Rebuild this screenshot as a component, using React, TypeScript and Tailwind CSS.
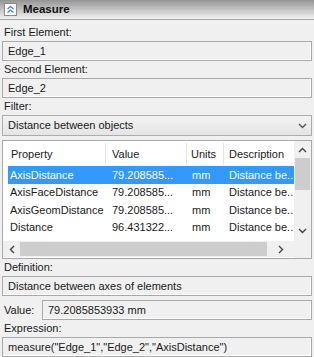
import React from "react";

const rows = [
  { p: "AxisDistance", v: "79.208585...", u: "mm", d: "Distance be..", sel: true },
  { p: "AxisFaceDistance", v: "79.208585...", u: "mm", d: "Distance be..", sel: false },
  { p: "AxisGeomDistance", v: "79.208585...", u: "mm", d: "Distance be..", sel: false },
  { p: "Distance", v: "96.431322...", u: "mm", d: "Distance be..", sel: false },
];

function Box({ children, className = "" }: { children?: React.ReactNode; className?: string }) {
  return (
    <div
      className={
        "h-[20px] border border-[#a9a9a9] bg-[#f0f0f0] shadow-[inset_-1px_-1px_0_#ffffff] flex items-center pl-[5px] text-[11px] text-[#1a1a1a] whitespace-nowrap overflow-hidden " +
        className
      }
    >
      {children}
    </div>
  );
}

function Label({ children }: { children: React.ReactNode }) {
  return <div className="h-[17px] flex items-center pl-[2px] text-[11px] text-[#1a1a1a]">{children}</div>;
}

export default function App() {
  return (
    <div
      className="w-[314px] h-[357px] bg-[#f0f0f0] overflow-hidden flex flex-col"
      style={{ fontFamily: '"Liberation Sans", Arial, sans-serif' }}
    >
      <div className="h-[20px] bg-gradient-to-b from-[#949494] to-[#f3f3f3] border-b border-[#a3a3a3] flex items-center pl-[4px] gap-[6px] shrink-0">
        <div className="w-[13px] h-[13px] bg-white border border-[#8a8a8a] flex items-center justify-center">
          <svg width="9" height="9" viewBox="0 0 9 9">
            <path d="M1.5 4 L4.5 1.5 L7.5 4 M1.5 7.5 L4.5 5 L7.5 7.5" fill="none" stroke="#3a7fc8" strokeWidth="1.3" />
          </svg>
        </div>
        <span className="text-[11.5px] font-bold text-[#111]">Measure</span>
      </div>

      <div className="flex flex-col px-[2px] pt-[4px]">
        <Label>First Element:</Label>
        <Box>Edge_1</Box>
        <Label>Second Element:</Label>
        <Box>Edge_2</Box>
        <Label>Filter:</Label>
        <div className="h-[21px] border border-[#acacac] bg-gradient-to-b from-[#f2f2f2] to-[#e5e5e5] flex items-center justify-between pl-[5px] pr-[4px] text-[11px] text-[#1a1a1a]">
          <span>Distance between objects</span>
          <svg width="9" height="6" viewBox="0 0 9 6">
            <path d="M1 1 L4.5 4.5 L8 1" fill="none" stroke="#555" strokeWidth="1.4" />
          </svg>
        </div>

        <div className="mt-[4px] h-[119px] border border-[#a9a9a9] bg-white flex text-[11px] text-[#1a1a1a]">
          <div className="flex-1 flex flex-col pl-[5px] pt-[2px]">
            <div className="h-[22px] flex items-center">
              <div className="w-[98px] h-full flex items-center pl-[3px] border-r border-[#e5e5e5]">Property</div>
              <div className="w-[81px] h-full flex items-center pl-[6px] border-r border-[#e5e5e5]">Value</div>
              <div className="w-[37px] h-full flex items-center pl-[4px] border-r border-[#e5e5e5]">Units</div>
              <div className="flex-1 h-full flex items-center pl-[5px]">Description</div>
            </div>
            <div className="h-[1px]" />
            {rows.map((r) => (
              <div
                key={r.p}
                className={"h-[17.5px] flex items-center " + (r.sel ? "bg-[#3399ff] text-white" : "")}
              >
                <div className="w-[98px] pl-[2px]">{r.p}</div>
                <div className="w-[81px] pl-[6px]">{r.v}</div>
                <div className="w-[37px] pl-[5px]">{r.u}</div>
                <div className="flex-1 pl-[5px] whitespace-nowrap">{r.d}</div>
              </div>
            ))}
            <div className="flex-1" />
            <div className="h-[16px] -ml-[5px] mb-[1px] flex items-center bg-[#f0f0f0]">
              <div className="w-[17px] flex items-center justify-center">
                <svg width="6" height="9" viewBox="0 0 6 9">
                  <path d="M5 1 L1.5 4.5 L5 8" fill="none" stroke="#444" strokeWidth="1.4" />
                </svg>
              </div>
              <div className="w-[247px] h-[14px] bg-[#cdcdcd]" />
              <div className="flex-1 flex items-center justify-center">
                <svg width="6" height="9" viewBox="0 0 6 9">
                  <path d="M1 1 L4.5 4.5 L1 8" fill="none" stroke="#444" strokeWidth="1.4" />
                </svg>
              </div>
            </div>
          </div>
          <div className="w-[17px] bg-[#f0f0f0] flex flex-col items-center">
            <div className="h-[17px] w-full flex items-center justify-center">
              <svg width="9" height="6" viewBox="0 0 9 6">
                <path d="M1 5 L4.5 1.5 L8 5" fill="none" stroke="#444" strokeWidth="1.4" />
              </svg>
            </div>
            <div className="w-[15px] h-[32px] bg-[#cdcdcd]" />
            <div className="flex-1" />
            <div className="h-[17px] w-full flex items-center justify-center mb-[19px]">
              <svg width="9" height="6" viewBox="0 0 9 6">
                <path d="M1 1 L4.5 4.5 L8 1" fill="none" stroke="#444" strokeWidth="1.4" />
              </svg>
            </div>
          </div>
        </div>

        <Label>Definition:</Label>
        <Box>Distance between axes of elements</Box>
        <div className="mt-[4px] flex items-center">
          <div className="w-[40px] pl-[2px] text-[11px] text-[#1a1a1a]">Value:</div>
          <Box className="flex-1">79.2085853933 mm</Box>
        </div>
        <Label>Expression:</Label>
        <Box>measure("Edge_1","Edge_2","AxisDistance")</Box>
      </div>
    </div>
  );
}
